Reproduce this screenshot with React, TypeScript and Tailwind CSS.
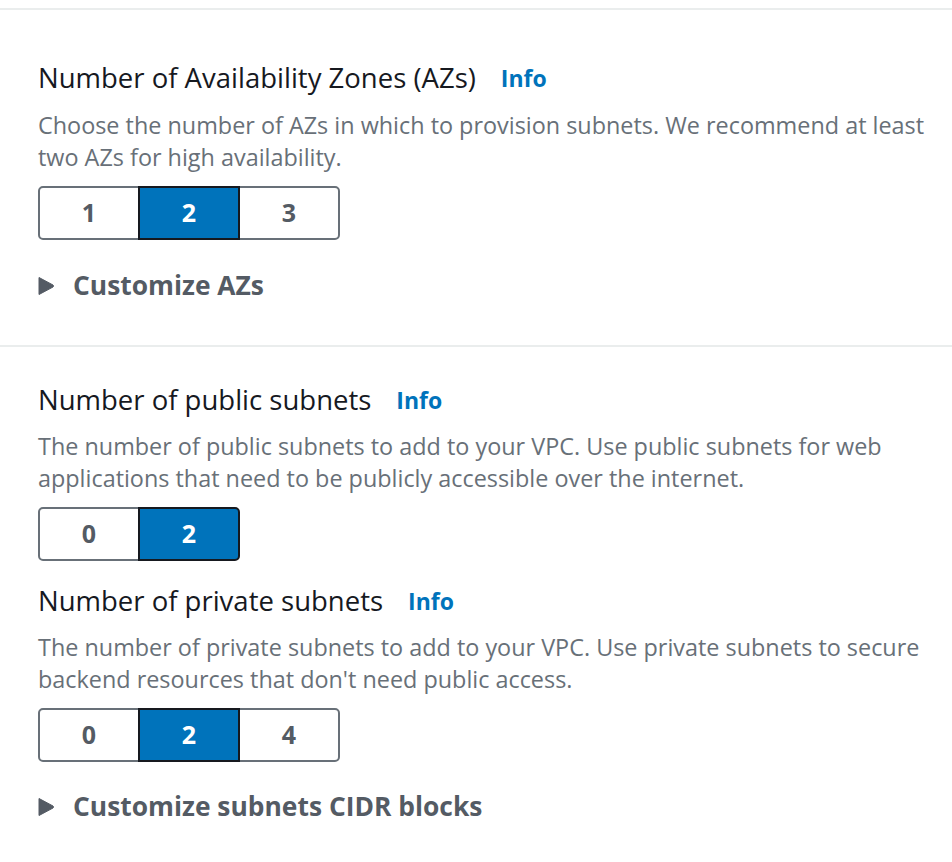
import React from "react";

type SegmentProps = {
  options: string[];
  selected: string;
};

function Segmented({ options, selected }: SegmentProps) {
  return (
    <div className="flex">
      {options.map((opt, i) => {
        const active = opt === selected;
        const first = i === 0;
        const last = i === options.length - 1;
        return (
          <button
            key={opt}
            type="button"
            className={[
              "h-[54px] w-[102px] border-2 text-[25px] font-bold flex items-center justify-center",
              first ? "rounded-l-[5px]" : "-ml-[2px]",
              last ? "rounded-r-[5px]" : "",
              active
                ? "relative z-10 bg-[#0073bb] border-[#16191f] text-white"
                : "bg-white border-[#687078] text-[#545b64]",
            ].join(" ")}
          >
            {opt}
          </button>
        );
      })}
    </div>
  );
}

function Label({ title }: { title: string }) {
  return (
    <div className="flex items-center h-[36px]">
      <span className="text-[27.5px] text-[#16191f]">{title}</span>
      <span className="ml-[25px] text-[23px] font-bold text-[#0073bb]">Info</span>
    </div>
  );
}

function Description({ children }: { children: React.ReactNode }) {
  return <p className="text-[23.4px] leading-[32px] text-[#687078]">{children}</p>;
}

function Expander({ label }: { label: string }) {
  return (
    <div className="flex items-center h-[36px] text-[#545b64]">
      <svg width="16" height="20" viewBox="0 0 16 20" className="shrink-0">
        <path d="M1 1.5 L15 9 Q16 10 15 11 L1 18.5 Z" fill="#545b64" strokeLinejoin="round" stroke="#545b64" strokeWidth="1" />
      </svg>
      <span className="ml-[19px] text-[26.4px] font-bold">{label}</span>
    </div>
  );
}

export default function App() {
  return (
    <div className="min-h-[862px] bg-white font-['Open_Sans',sans-serif] pt-2">
      <section className="border-t-2 border-[#eaeded] pt-[50px] pb-[41px] pl-[38px] pr-[18px]">
        <Label title="Number of Availability Zones (AZs)" />
        <div className="mt-[13px]">
          <Description>
            Choose the number of AZs in which to provision subnets. We recommend at least two AZs for high availability.
          </Description>
        </div>
        <div className="mt-[13px]">
          <Segmented options={["1", "2", "3"]} selected="2" />
        </div>
        <div className="mt-[28px]">
          <Expander label="Customize AZs" />
        </div>
      </section>

      <section className="border-t-2 border-[#eaeded] pt-[35px] pl-[38px] pr-[18px]">
        <Label title="Number of public subnets" />
        <div className="mt-[12px]">
          <Description>
            The number of public subnets to add to your VPC. Use public subnets for web applications that need to be publicly accessible over the internet.
          </Description>
        </div>
        <div className="mt-[13px]">
          <Segmented options={["0", "2"]} selected="2" />
        </div>

        <div className="mt-[22px]">
          <Label title="Number of private subnets" />
        </div>
        <div className="mt-[12px]">
          <Description>
            The number of private subnets to add to your VPC. Use private subnets to secure backend resources that don't need public access.
          </Description>
        </div>
        <div className="mt-[13px]">
          <Segmented options={["0", "2", "4"]} selected="2" />
        </div>
        <div className="mt-[27px]">
          <Expander label="Customize subnets CIDR blocks" />
        </div>
      </section>
    </div>
  );
}
